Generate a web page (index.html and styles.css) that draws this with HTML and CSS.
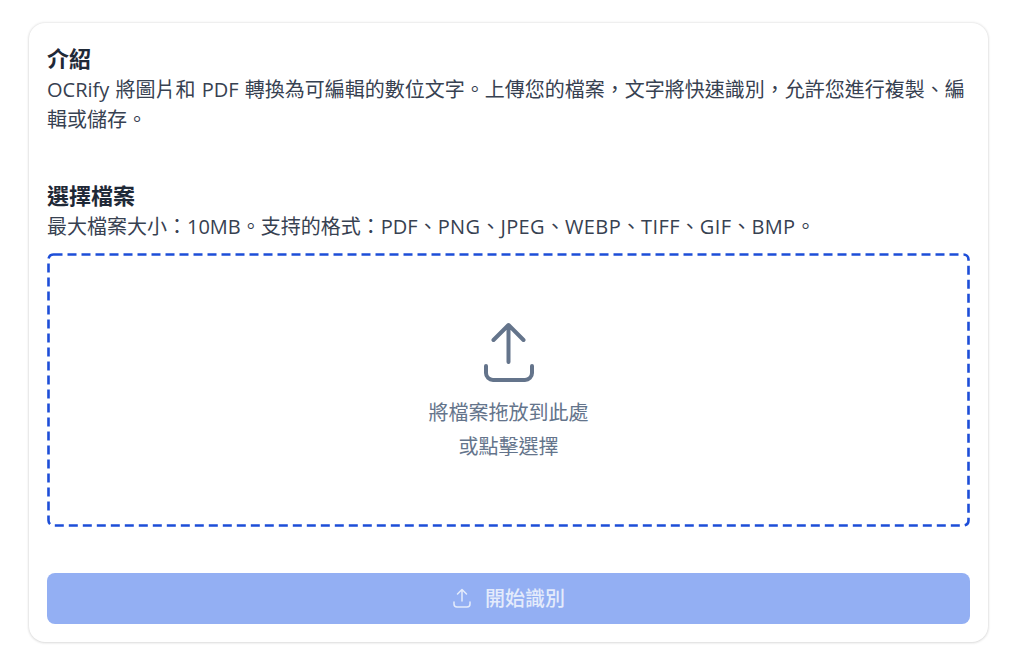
FILE: index.html
```html
<!DOCTYPE html>
<html lang="zh-Hant">
<head>
  <meta charset="UTF-8">
  <title>OCRify</title>
  <link rel="stylesheet" href="styles.css">
</head>
<body>
  <main class="card">
    <section class="intro">
      <h2>介紹</h2>
      <p class="intro-text">OCRify 將圖片和 PDF 轉換為可編輯的數位文字。上傳您的檔案，文字將快速識別，允許您進行複製、編輯或儲存。</p>
    </section>
    <section class="picker">
      <h2>選擇檔案</h2>
      <p>最大檔案大小：10MB。支持的格式：PDF、<span class="en">PNG</span>、<span class="en">JPEG</span>、<span class="en">WEBP</span>、<span class="en">TIFF</span>、<span class="en">GIF</span>、<span class="en">BMP</span>。</p>
      <div class="dropzone">
        <svg class="drop-border"><rect class="drop-rect" rx="5"/></svg>
        <svg class="drop-icon" viewBox="0 0 50 60" fill="none" stroke="currentColor" stroke-width="4" stroke-linecap="round" stroke-linejoin="round">
          <path d="M24.5 40V3M9.5 18 24.5 3l15 15"/>
          <path d="M2 44v7a7 7 0 0 0 7 7h32a7 7 0 0 0 7-7v-7"/>
        </svg>
        <div class="drop-title">將檔案拖放到此處</div>
        <div class="drop-sub">或點擊選擇</div>
      </div>
    </section>
    <button class="start-btn" type="button" disabled>
      <svg viewBox="0 0 20 20" fill="none" stroke="currentColor" stroke-width="1.5" stroke-linecap="round" stroke-linejoin="round">
        <path d="M10 13V1.5M5.5 6 10 1.5 14.5 6"/>
        <path d="M2 14v2a3 3 0 0 0 3 3h10a3 3 0 0 0 3-3v-2"/>
      </svg>
      <span>開始識別</span>
    </button>
  </main>
</body>
</html>
```

FILE: styles.css
```css
body {
  margin: 0;
  height: 671px;
  overflow: hidden;
  background: #fff;
  font-family: "Open Sans", "Noto Sans CJK TC", sans-serif;
  color: #374151;
}

.card {
  box-sizing: border-box;
  width: 959px;
  height: 619px;
  margin: 23px 0 0 29px;
  padding: 19px 18px 18px;
  display: flex;
  flex-direction: column;
  background: #fff;
  border-radius: 16px;
  box-shadow: 0 0 3px rgba(0, 0, 0, 0.16), 0 1px 3px rgba(0, 0, 0, 0.08);
}

h2 {
  margin: 0 0 1px;
  font-size: 22px;
  line-height: 32px;
  font-weight: 600;
  color: #1f2937;
}

p {
  margin: 0;
  font-size: 20px;
  line-height: 30px;
}

.intro-text {
  word-spacing: 1px;
}

.en {
  letter-spacing: 0.38px;
}

.intro {
  height: 137px;
}

.dropzone {
  position: relative;
  box-sizing: border-box;
  height: 274px;
  margin-top: 11px;
  display: flex;
  flex-direction: column;
  align-items: center;
  color: #64748b;
}

.drop-border {
  position: absolute;
  top: 0;
  left: 0;
  width: 100%;
  height: 100%;
}

.drop-rect {
  x: 1.5px;
  y: 1.5px;
  width: calc(100% - 3px);
  height: calc(100% - 3px);
  fill: none;
  stroke: #1d4ed8;
  stroke-width: 2.6px;
  stroke-dasharray: 9 5;
}

.drop-icon {
  width: 50px;
  height: 60px;
  margin-top: 69px;
}

.drop-title,
.drop-sub {
  font-size: 20px;
  line-height: 34px;
}

.drop-title {
  margin-top: 14px;
}

.start-btn {
  height: 51px;
  margin-top: auto;
  display: flex;
  justify-content: center;
  align-items: center;
  gap: 13px;
  padding: 0 0 2px;
  border: 0;
  border-radius: 8px;
  background: #93aff3;
  color: #e4ebfb;
  font-family: inherit;
  font-size: 20px;
  font-weight: 500;
}

.start-btn svg {
  width: 20px;
  height: 20px;
}
```
